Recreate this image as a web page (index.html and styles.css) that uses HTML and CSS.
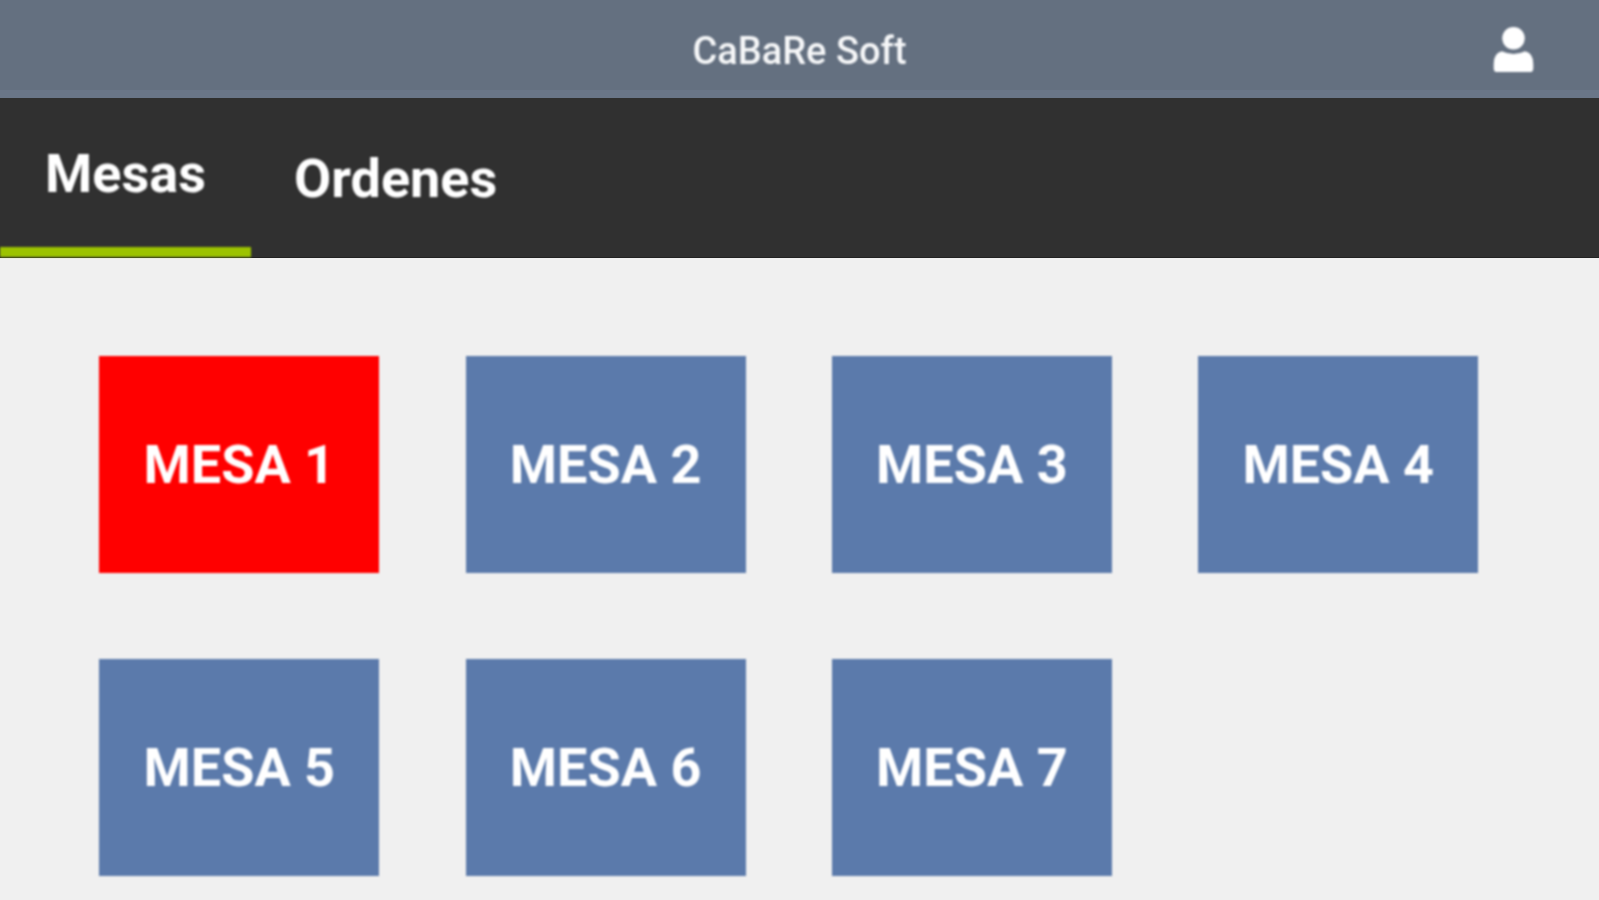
FILE: index.html
```html
<!DOCTYPE html>
<html lang="es">
<head>
<title>CaBaRe Soft</title>
<meta name="viewport" content="width=device-width, initial-scale=1.0">
<link rel="stylesheet" href="styles.css">
</head>
<body>
<header class="cabecera">
    <span class="titulo">CaBaRe Soft</span>
    <svg class="usuario" viewBox="0 0 44 50" aria-label="Usuario">
        <circle cx="22" cy="12.5" r="12.5" fill="#fff"/>
        <path d="M9 27 Q22 33 35 27 Q44 29 44 41 V46 Q44 50 40 50 H4 Q0 50 0 46 V41 Q0 29 9 27 Z" fill="#fff"/>
    </svg>
</header>

<nav class="pestanas">
    <div class="pestana activa">Mesas</div>
    <div class="pestana">Ordenes</div>
</nav>

<main class="mesas">
    <div class="mesa ocupada">MESA 1</div>
    <div class="mesa">MESA 2</div>
    <div class="mesa">MESA 3</div>
    <div class="mesa">MESA 4</div>
    <div class="mesa">MESA 5</div>
    <div class="mesa">MESA 6</div>
    <div class="mesa">MESA 7</div>
</main>
</body>
</html>
```

FILE: styles.css
```css
html, body {
    height: 100%;
}

body {
    margin: 0;
    overflow: hidden;
    background: #f0f0f0;
    font-family: Roboto, "Liberation Sans", sans-serif;
    color: white;
}

.cabecera {
    height: 90px;
    border-bottom: 8px solid #6a7688;
    background: #647080;
    display: flex;
    align-items: center;
    justify-content: center;
    position: relative;
}

.titulo {
    font-size: 38px;
    font-weight: 500;
    color: #f6f7f8;
    padding-top: 12px;
    filter: blur(0.8px);
}

.usuario {
    position: absolute;
    right: 65px;
    top: 27px;
    width: 41px;
    height: 45px;
    filter: blur(1px);
}

.pestanas {
    box-sizing: border-box;
    height: 160px;
    background: #303030;
    display: flex;
    border-bottom: 1px solid #222;
}

.pestana {
    box-sizing: border-box;
    display: flex;
    align-items: center;
    justify-content: center;
    padding: 2px 43px 0;
    font-size: 54px;
    font-weight: 700;
    filter: blur(1px);
}

.activa {
    width: 251px;
    padding: 2px 0 0;
    border-bottom: 10px solid #9cc300;
}

.mesas {
    display: grid;
    grid-template-columns: repeat(4, 280px);
    grid-auto-rows: 217px;
    column-gap: 86.3px;
    row-gap: 86px;
    padding: 98px 0 0 99.3px;
}

.mesa {
    background: #5b7aab;
    display: flex;
    align-items: center;
    justify-content: center;
    font-size: 54px;
    font-weight: 700;
    filter: blur(1px);
}

.ocupada {
    background: #ff0000;
}
```
